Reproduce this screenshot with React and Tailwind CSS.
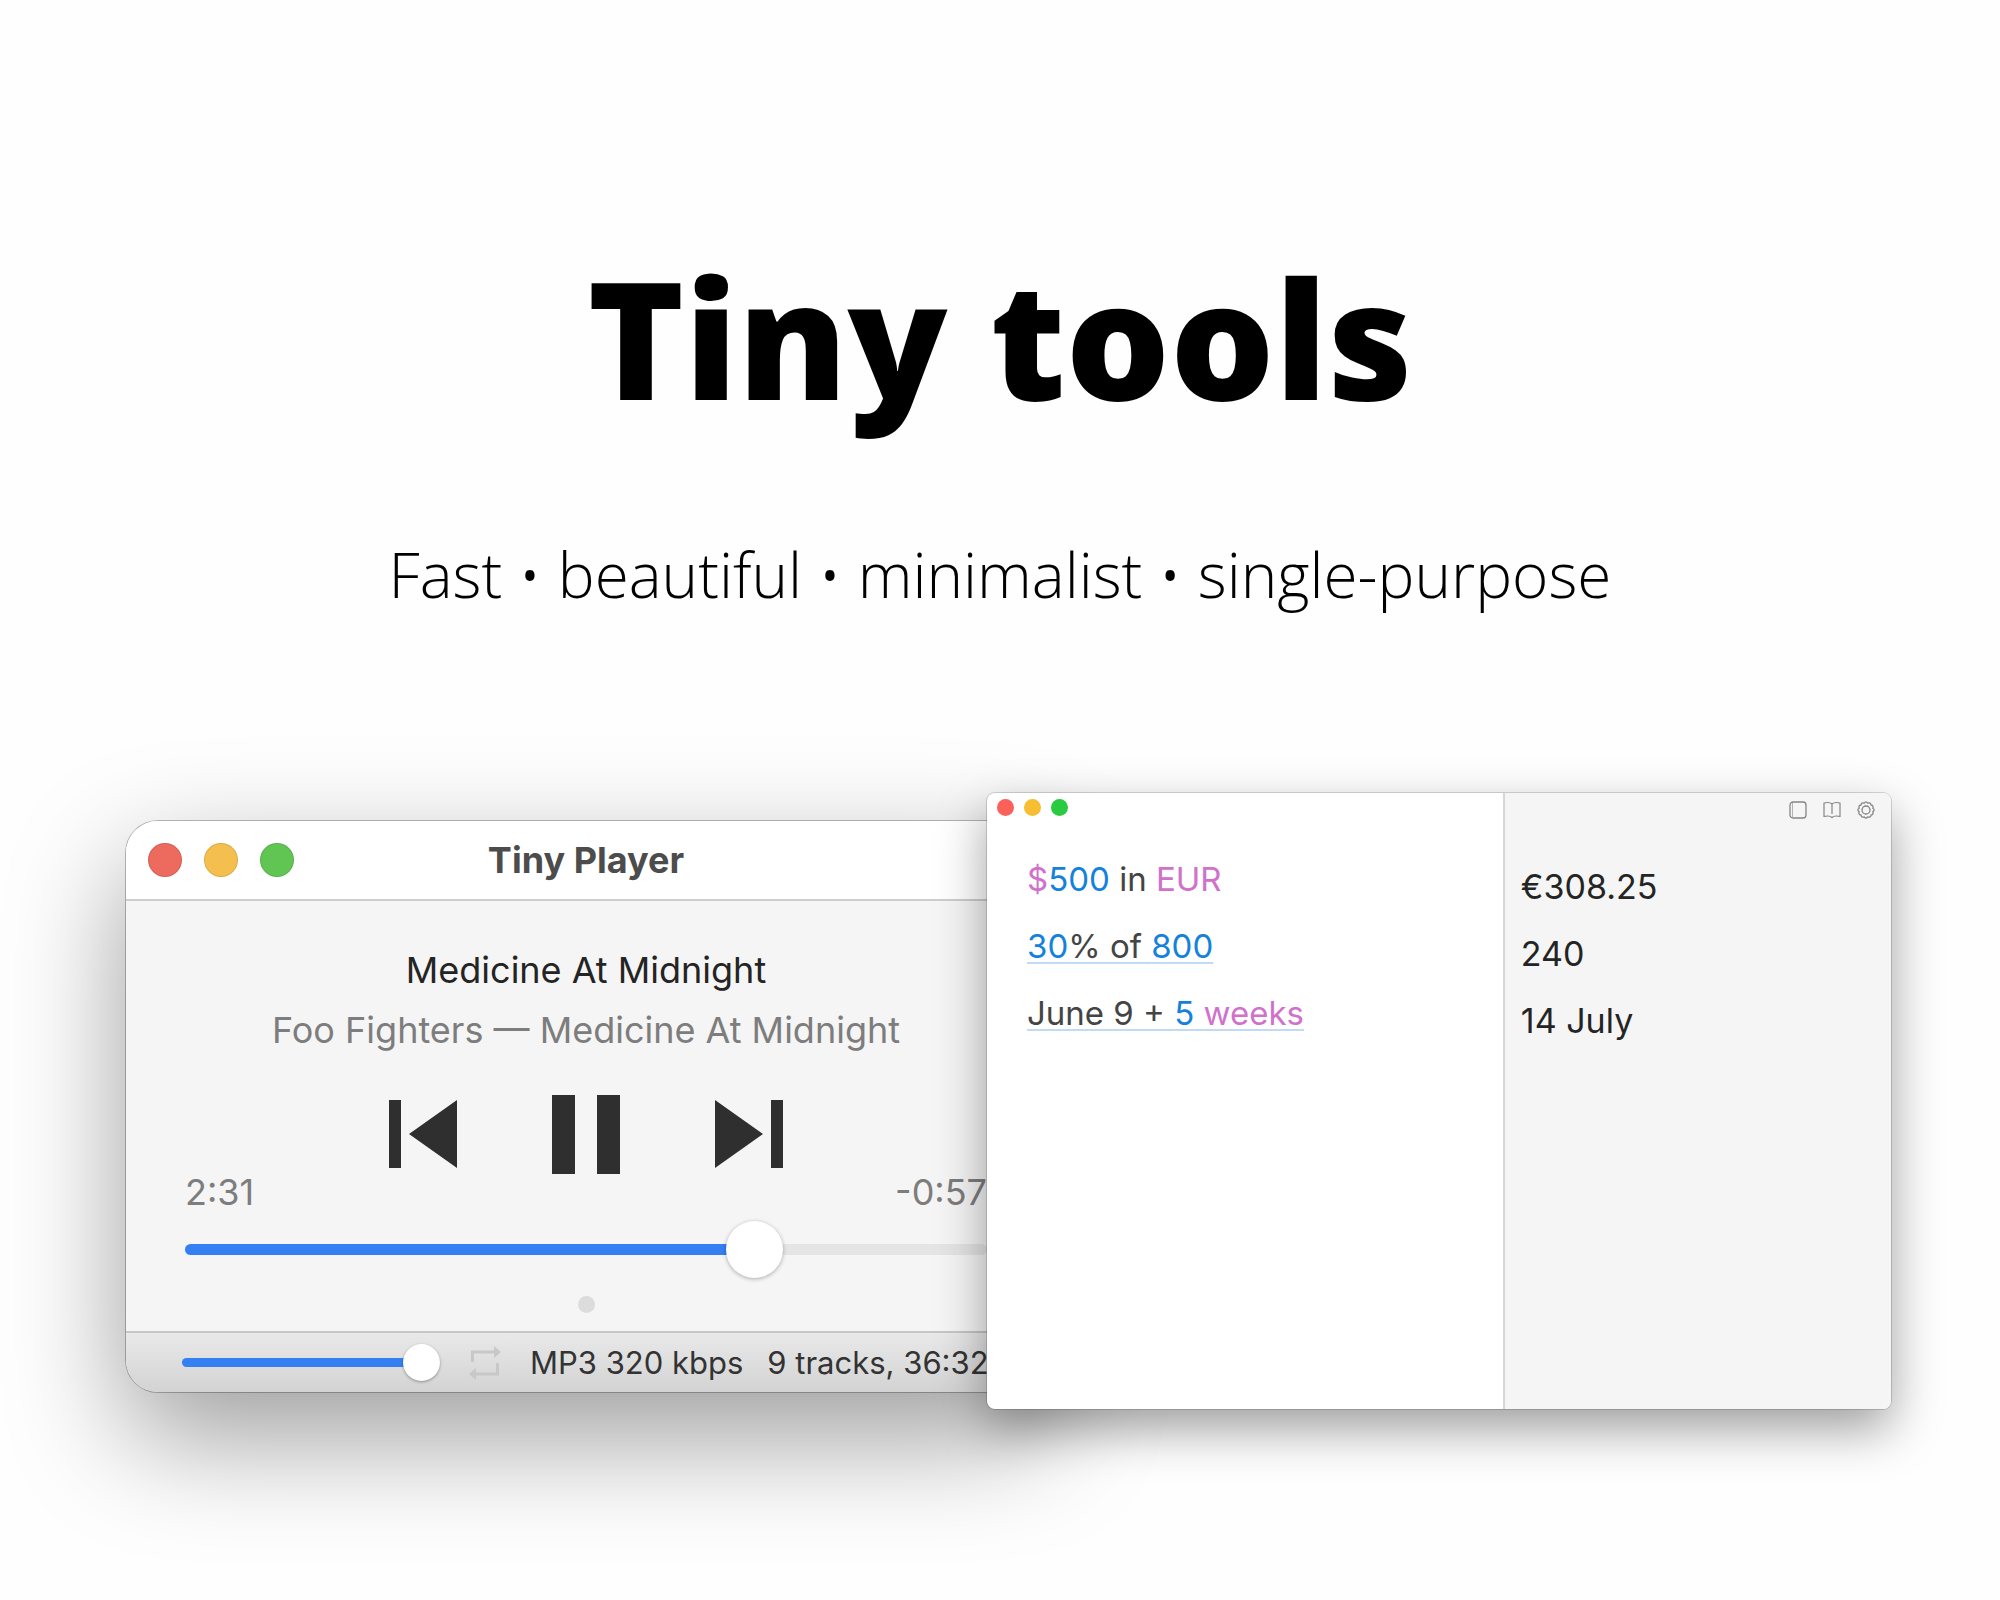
const lights = ['bg-[#ec6a5e]', 'bg-[#f4bf4f]', 'bg-[#61c554]'];
const smallLights = ['bg-[#fc605b]', 'bg-[#f6be30]', 'bg-[#2aca41]'];
const lightNames = ['Close', 'Minimise', 'Zoom'];

function TrackIcon({ flip }) {
  return (
    <svg width="68" height="68" viewBox="0 0 68 68" fill="#2f2f2f" className={flip ? 'rotate-180' : ''} aria-hidden="true">
      <path d="M0 0h12v68H0zM68 0v68L20 34z" />
    </svg>
  );
}

function Player() {
  return (
    <article className="mt-7 flex min-w-0 grow-[920] basis-0 flex-col self-start overflow-clip rounded-[32px] bg-[#f5f5f5] shadow-[0_0_0_1px_rgba(0,0,0,0.25),0_44px_116px_rgba(0,0,0,0.39)]">
      <header className="grid h-20 grid-cols-3 items-center border-b-2 border-[#cdcdcd] bg-white px-[22px]">
        <div className="flex gap-[22px]">
          {lights.map((c, i) => (
            <button key={c} aria-label={lightNames[i]} className={`size-[34px] rounded-full border border-black/10 ${c}`} />
          ))}
        </div>
        <h2 className="text-center text-[36px] leading-10 font-bold whitespace-nowrap text-[#4c4c4c]">Tiny Player</h2>
      </header>

      <div className="flex flex-col items-center px-[59px] pt-[43px]">
        <p className="text-[36px] leading-[52px] whitespace-nowrap text-[#242424]">Medicine At Midnight</p>
        <p className="mt-2 text-[36px] leading-[52px] whitespace-nowrap text-[#7d7d7d]">Foo Fighters — Medicine At Midnight</p>
        <div className="mt-[38px] flex h-20 items-center gap-[95px]">
          <button aria-label="Previous track"><TrackIcon /></button>
          <button aria-label="Pause">
            <svg width="68" height="79" viewBox="0 0 68 79" fill="#2f2f2f" aria-hidden="true">
              <path d="M0 0h23v79H0zM45 0h23v79H45z" />
            </svg>
          </button>
          <button aria-label="Next track"><TrackIcon flip /></button>
        </div>
        <div className="flex w-full justify-between text-[36px] leading-9 text-[#7d7d7d]">
          <span>2:31</span>
          <span>-0:57</span>
        </div>
        <input
          type="range"
          aria-label="Playback position"
          min="0"
          max="208"
          defaultValue="151"
          className="mt-[10px] h-[58px] w-full appearance-none bg-transparent [&::-webkit-slider-runnable-track]:h-[11px] [&::-webkit-slider-runnable-track]:rounded-full [&::-webkit-slider-runnable-track]:bg-[linear-gradient(to_right,#357ff3_71%,#e5e5e5_71%)] [&::-webkit-slider-thumb]:-mt-[23px] [&::-webkit-slider-thumb]:size-[57px] [&::-webkit-slider-thumb]:appearance-none [&::-webkit-slider-thumb]:rounded-full [&::-webkit-slider-thumb]:bg-white [&::-webkit-slider-thumb]:shadow-[0_1px_4px_rgba(0,0,0,0.3)]"
        />
        <span className="mt-[18px] mb-[18px] size-[17px] rounded-full bg-[#dcdcdc]" />
      </div>

      <footer className="flex h-[61px] items-center overflow-hidden border-t-2 border-[#c6c6c6] bg-linear-to-b from-[#e9e9e9] to-[#d3d3d3] pl-14">
        <input
          type="range"
          aria-label="Volume"
          min="0"
          max="100"
          defaultValue="100"
          className="h-[38px] w-[258px] shrink-0 appearance-none bg-transparent [&::-webkit-slider-runnable-track]:h-[9px] [&::-webkit-slider-runnable-track]:rounded-full [&::-webkit-slider-runnable-track]:bg-[#357ff3] [&::-webkit-slider-thumb]:-mt-[14px] [&::-webkit-slider-thumb]:size-[37px] [&::-webkit-slider-thumb]:appearance-none [&::-webkit-slider-thumb]:rounded-full [&::-webkit-slider-thumb]:bg-white [&::-webkit-slider-thumb]:shadow-[0_1px_3px_rgba(0,0,0,0.35)]"
        />
        <button aria-label="Repeat" className="ml-7 shrink-0">
          <svg width="34" height="36" viewBox="0 0 34 36" aria-hidden="true" fill="none" stroke="#c8c8c8" strokeWidth="3">
            <path d="M4.500 17V7H26M29.500 18v11H7" />
            <path d="M26 1l7 6-7 6zM8 23l-7 6 7 6z" fill="#c8c8c8" stroke="none" />
          </svg>
        </button>
        <p className="ml-7 flex gap-6 text-[31px] leading-10 whitespace-nowrap text-[#333]">
          <span>MP3 320 kbps</span>
          <span>9 tracks, 36:32</span>
        </p>
      </footer>
    </article>
  );
}

const Num = ({ children }) => <span className="text-[#1482dc]">{children}</span>;
const Unit = ({ children }) => <span className="text-[#d071cb]">{children}</span>;

function Calculator() {
  return (
    <article className="relative -ml-[59px] flex h-[616px] min-w-0 grow-[904] basis-0 overflow-clip rounded-lg bg-white shadow-[0_0_0_1px_rgba(0,0,0,0.15),0_20px_50px_rgba(0,0,0,0.38)]">
      <div className="grow-[517] basis-0">
        <div className="flex gap-[10px] px-[10px] pt-[6px]">
          {smallLights.map((c, i) => (
            <button key={c} aria-label={lightNames[i]} className={`size-[17px] rounded-full ${c}`} />
          ))}
        </div>
        <div className="mt-[30px] flex flex-col items-start pl-10 text-[33px] leading-[67px] whitespace-nowrap text-[#444]">
          <p><Unit>$</Unit><Num>500</Num> in <Unit>EUR</Unit></p>
          <p className="underline decoration-[#c2dbf5] decoration-2 underline-offset-4 [text-decoration-skip-ink:none]"><Num>30</Num>% of <Num>800</Num></p>
          <p className="underline decoration-[#c2dbf5] decoration-2 underline-offset-4 [text-decoration-skip-ink:none]">June 9 + <Num>5</Num> <Unit>weeks</Unit></p>
        </div>
      </div>
      <aside className="grow-[387] basis-0 border-l-2 border-[#d6d6d6] bg-[#f5f5f5]">
        <div className="flex justify-end gap-4 pt-2 pr-4 text-[#858585]">
          <button aria-label="Sidebar">
            <svg width="18" height="18" viewBox="0 0 18 18" fill="none" stroke="currentColor" aria-hidden="true">
              <rect x="1" y="1" width="16" height="16" rx="3" strokeWidth="1.300" />
              <path d="M3.500 2v14" strokeWidth="0.600" />
            </svg>
          </button>
          <button aria-label="Reference">
            <svg width="18" height="18" viewBox="0 0 18 18" fill="none" stroke="currentColor" strokeWidth="1.200" strokeLinejoin="round" aria-hidden="true">
              <path d="M9 3C7.500 1.500 4 1.300 1 2v13.500c3-.7 6.500-.5 8 1 1.500-1.500 5-1.700 8-1V2c-3-.7-6.500-.5-8 1zM9 3v10" />
            </svg>
          </button>
          <button aria-label="Settings">
            <svg width="18" height="18" viewBox="0 0 18 18" fill="none" stroke="currentColor" strokeWidth="1.300" aria-hidden="true">
              <circle cx="9" cy="9" r="4" />
              <path strokeLinejoin="round" d="M7.300 2.200Q9 -.4 10.700 2.200Q13.700 1.100 14 4Q16.900 4.300 15.800 7.300Q18.400 9 15.800 10.700Q16.900 13.700 14 14Q13.700 16.900 10.700 15.800Q9 18.400 7.300 15.800Q4.300 16.900 4 14Q1.100 13.700 2.200 10.700Q-.4 9 2.200 7.300Q1.100 4.300 4 4Q4.300 1.100 7.300 2.200z" />
            </svg>
          </button>
        </div>
        <div className="mt-[34px] pl-4 text-[34px] leading-[67px] whitespace-nowrap text-[#242424]">
          <p>€308.25</p>
          <p>240</p>
          <p>14 July</p>
        </div>
      </aside>
    </article>
  );
}

export default function App() {
  return (
    <main className="min-h-screen overflow-x-clip bg-[#fefefe] font-[Inter,sans-serif]">
      <div className="pt-[225px] text-center font-['Open_Sans',sans-serif] text-black">
        <h1 className="text-[164px] leading-[224px] font-extrabold">Tiny tools</h1>
        <p className="mt-[83px] text-[62px] leading-[84px] font-light">Fast • beautiful • minimalist • single-purpose</p>
      </div>
      <section className="mt-[177px] flex items-start pr-[109px] pb-48 pl-[126px]">
        <Player />
        <Calculator />
      </section>
    </main>
  );
}
